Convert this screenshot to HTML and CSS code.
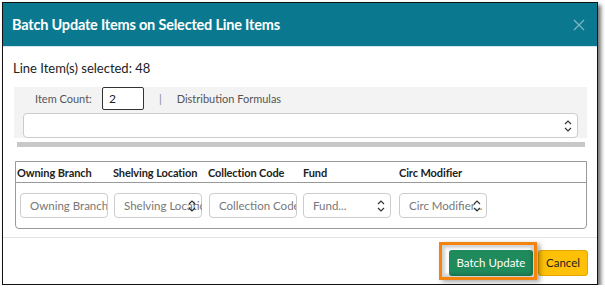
FILE: index.html
```html
<!DOCTYPE html>
<html lang="en">
<head>
	<meta charset="UTF-8">
	<title>Batch Update Items</title>
	<link rel="stylesheet" href="styles.css">
</head>
<body>

	<div class="dialog">
		<div class="dialog-header">
			<div class="dialog-title">Batch Update Items on Selected Line Items</div>
			<svg class="close" width="12" height="12" viewBox="0 0 12 12">
				<path d="M1 1 L11 11 M11 1 L1 11" stroke="#7db6c4" stroke-width="1.3" fill="none"/>
			</svg>
		</div>

		<div class="dialog-body">
			<div class="selected-count">Line Item(s) selected: 48</div>

			<div class="formula-panel">
				<div class="count-row">
					<span class="count-label">Item Count:</span>
					<div class="count-input">2</div>
					<span class="divider">|</span>
					<span class="count-label">Distribution Formulas</span>
				</div>
				<div class="select wide-select">
					<span></span>
					<svg class="chevrons" width="8" height="14" viewBox="0 0 8 14">
						<path d="M1 5 L4 2 L7 5 M1 9 L4 12 L7 9" stroke="#333" stroke-width="1.2" fill="none"/>
					</svg>
				</div>
			</div>
			<div class="scroll-bar"></div>

			<div class="copy-table">
				<div class="copy-head">
					<div>Owning Branch</div>
					<div>Shelving Location</div>
					<div>Collection Code</div>
					<div>Fund</div>
					<div>Circ Modifier</div>
				</div>
				<div class="copy-row">
					<div class="cell"><div class="field">Owning Branch</div></div>
					<div class="cell"><div class="field select">Shelving Location
						<svg class="chevrons" width="8" height="14" viewBox="0 0 8 14">
							<path d="M1 5 L4 2 L7 5 M1 9 L4 12 L7 9" stroke="#333" stroke-width="1.2" fill="none"/>
						</svg></div></div>
					<div class="cell"><div class="field">Collection Code</div></div>
					<div class="cell"><div class="field select">Fund...
						<svg class="chevrons" width="8" height="14" viewBox="0 0 8 14">
							<path d="M1 5 L4 2 L7 5 M1 9 L4 12 L7 9" stroke="#333" stroke-width="1.2" fill="none"/>
						</svg></div></div>
					<div class="cell"><div class="field select">Circ Modifier...
						<svg class="chevrons" width="8" height="14" viewBox="0 0 8 14">
							<path d="M1 5 L4 2 L7 5 M1 9 L4 12 L7 9" stroke="#333" stroke-width="1.2" fill="none"/>
						</svg></div></div>
				</div>
			</div>
		</div>

		<div class="dialog-footer">
			<div class="btn btn-update">Batch Update</div>
			<div class="btn btn-cancel">Cancel</div>
			<!-- screenshot callout -->
			<div class="callout"></div>
		</div>
	</div>

</body>
</html>
```

FILE: styles.css
```css
body {
	margin: 0;
	background: #fff;
	font-family: Lato, "Open Sans", sans-serif;
	color: #333;
}

.dialog {
	margin: 2px 0 0 2px;
	width: 594px;
	height: 281px;
	border: 1px solid #111;
	box-shadow: 3px 3px 4px rgba(0,0,0,0.55);
	background: #fff;
	display: flex;
	flex-direction: column;
}

.dialog-header {
	height: 43px;
	background: #0a7990;
	border-bottom: 1px solid #d3e6eb;
	display: flex;
	align-items: center;
	justify-content: space-between;
	padding: 0 12px 0 9px;
}

.dialog-title {
	color: #fff;
	font-size: 14.5px;
	font-weight: bold;
	letter-spacing: -0.2px;
}

.dialog-body {
	padding: 12px 0 0 0;
	flex: 1;
}

.selected-count {
	font-size: 13px;
	line-height: 18px;
	padding-left: 10px;
	color: #222;
}

.formula-panel {
	margin: 10px 0 0 11px;
	width: 573px;
	background: #f3f3f3;
}

.count-row {
	display: flex;
	align-items: center;
	height: 23px;
	padding-left: 21px;
}

.count-label {
	font-size: 11px;
	color: #555;
}

.count-input {
	width: 34px;
	height: 21px;
	margin-left: 10px;
	border: 1px solid #333;
	border-radius: 2px;
	background: #fff;
	font-size: 12px;
	line-height: 21px;
	padding-left: 6px;
	color: #222;
}

.divider {
	font-size: 11px;
	color: #888;
	margin: 0 15px 0 15px;
}

.select {
	position: relative;
}

.chevrons {
	position: absolute;
	right: 5px;
	top: 50%;
	margin-top: -7px;
}

.wide-select {
	margin: 3px 0 0 9px;
	width: 553px;
	height: 23px;
	border: 1px solid #ccc;
	border-radius: 4px;
	background: #fff;
}

.scroll-bar {
	margin: 4px 0 0 14px;
	width: 568px;
	height: 5px;
	background: #c8c8c8;
}

.copy-table {
	margin: 14px 0 0 12px;
	width: 570px;
	border: 1px solid #999;
	border-radius: 0 0 4px 4px;
}

.copy-head,
.copy-row {
	display: grid;
	grid-template-columns: 96px 95px 95px 96px 92px;
	padding-left: 1px;
}

.copy-head {
	height: 20px;
	align-items: center;
	border-bottom: 1px solid #999;
	font-size: 11px;
	font-weight: bold;
	color: #222;
	white-space: nowrap;
	letter-spacing: -0.1px;
}

.copy-row {
	padding-top: 10px;
	padding-bottom: 10px;
}

.field {
	height: 23px;
	border: 1px solid #ccc;
	border-radius: 4px;
	font-size: 11.5px;
	line-height: 23px;
	color: #777;
	padding-left: 9px;
	width: 77px;
	white-space: nowrap;
	overflow: hidden;
}

.cell:nth-child(1) .field { margin-left: 3px; }
.cell:nth-child(2) .field { margin-left: 1px; }
.cell:nth-child(3) .field { margin-left: 1px; }

.field.select {
	overflow: visible;
}

.cell:nth-child(2) .field.select {
	clip-path: inset(0);
}

.dialog-footer {
	position: relative;
	border-top: 1px solid #e3e3e3;
	height: 47px;
	box-sizing: border-box;
	display: flex;
	justify-content: flex-end;
	align-items: flex-start;
	gap: 5px;
	padding: 12px 9px 0 0;
}

.btn {
	height: 26px;
	line-height: 26px;
	font-size: 11.5px;
	border-radius: 3px;
	box-sizing: border-box;
}

.btn-update {
	width: 84px;
	background: #1f8a5b;
	color: #fff;
	text-align: center;
}

.btn-cancel {
	width: 50px;
	background: #fec107;
	border: 1px solid #e0a800;
	color: #222;
	text-align: center;
	line-height: 24px;
}

.callout {
	position: absolute;
	left: 436px;
	top: 4px;
	width: 92px;
	height: 32px;
	border: 3px solid #f5840f;
	box-shadow: 3px 2px 5px rgba(0,0,0,0.35), inset 0 0 3px 3px rgba(0,0,0,0.18);
}
```
